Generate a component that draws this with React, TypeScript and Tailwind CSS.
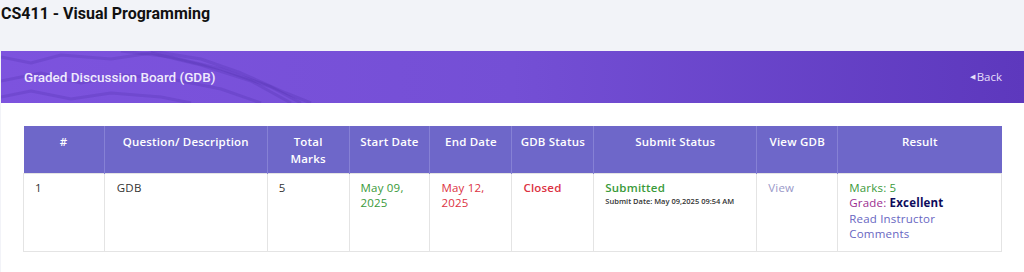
import React from "react";

const headers = [
  { label: "#", w: "w-[81px]" },
  { label: "Question/ Description", w: "w-[163px]" },
  { label: "Total Marks", w: "w-[82px]" },
  { label: "Start Date", w: "w-[81px]" },
  { label: "End Date", w: "w-[82px]" },
  { label: "GDB Status", w: "w-[82px]" },
  { label: "Submit Status", w: "w-[163px]" },
  { label: "View GDB", w: "w-[81px]" },
  { label: "Result", w: "w-[164px]" },
];

function BannerPattern() {
  return (
    <svg
      className="absolute left-0 top-0 h-full w-[360px]"
      viewBox="0 0 360 52"
      preserveAspectRatio="none"
      fill="none"
    >
      <g stroke="#4b2aa6" strokeOpacity="0.22" strokeWidth="3" strokeLinejoin="round">
        <path d="M0 6 L30 12 L60 4 L110 8 L150 2 L200 14 L250 30 L290 52" />
        <path d="M0 30 L40 22 L80 32 L120 24 L170 28 L220 38 L260 52" />
        <path d="M0 46 L30 40 L70 48 L110 42 L160 46 L190 52" />
        <path d="M120 0 L170 6 L220 18 L270 36 L300 52" />
        <path d="M150 0 L200 8 L240 22 L285 42 L310 52" />
      </g>
    </svg>
  );
}

export default function App() {
  return (
    <div className="h-[272px] w-[1024px] overflow-hidden bg-[#f2f3f8]">
      <h1 className="h-[51px] pt-[3px] pl-[1px] font-['Roboto',sans-serif] text-[16px] font-bold leading-[22px] text-[#111]">
        CS411 - Visual Programming
      </h1>
      <div className="ml-[1px] bg-white">
        <div className="relative flex h-[52px] items-center justify-between overflow-hidden bg-gradient-to-r from-[#7d53de] via-[#744fd5] to-[#5d38bd] pl-[23px] pr-[22px]">
          <BannerPattern />
          <span className="relative font-['Roboto',sans-serif] text-[13.5px] font-medium text-[#efeafd]">
            Graded Discussion Board (GDB)
          </span>
          <a className="relative flex items-center gap-[2px] font-['Open_Sans',sans-serif] text-[11.5px] text-[#e6defa]">
            <span className="text-[7px]">◀</span>Back
          </a>
        </div>
        <div className="px-[22px] pb-[21px] pt-[23px] font-['Open_Sans',sans-serif] tracking-[0.2px]">
          <table className="border-collapse">
            <thead>
              <tr className="bg-[#6e67c9]">
                {headers.map((h, i) => (
                  <th
                    key={h.label}
                    className={`${h.w} h-[47px] whitespace-nowrap px-[4px] pt-[7px] align-top text-[11.5px] font-semibold leading-[17px] text-white ${
                      i > 0 ? "border-l border-[#8681d5]" : ""
                    }`}
                  >
                    {h.label === "Total Marks" ? (
                      <>
                        Total
                        <br />
                        Marks
                      </>
                    ) : (
                      h.label
                    )}
                  </th>
                ))}
              </tr>
            </thead>
            <tbody>
              <tr className="h-[78px] align-top text-[11.5px] leading-[15.5px] text-[#333]">
                <td className="border border-[#e4e4e4] px-[11px] pt-[6px]">1</td>
                <td className="border border-[#e4e4e4] px-[12px] pt-[6px]">GDB</td>
                <td className="border border-[#e4e4e4] px-[11px] pt-[6px]">5</td>
                <td className="border border-[#e4e4e4] px-[11px] pt-[6px] font-medium text-[#3a9a3a]">
                  May 09,
                  <br />
                  2025
                </td>
                <td className="border border-[#e4e4e4] px-[11px] pt-[6px] font-medium text-[#dc3242]">
                  May 12,
                  <br />
                  2025
                </td>
                <td className="border border-[#e4e4e4] px-[11px] pt-[6px] font-semibold text-[#dc3242]">
                  Closed
                </td>
                <td className="border border-[#e4e4e4] px-[11px] pt-[6px]">
                  <div className="font-semibold text-[#3a9a3a]">Submitted</div>
                  <div className="whitespace-nowrap text-[7.5px] font-semibold leading-[13px] tracking-normal text-[#333]">
                    Submit Date: May 09,2025 09:54 AM
                  </div>
                </td>
                <td className="border border-[#e4e4e4] px-[11px] pt-[6px] text-[#9a98c8]">View</td>
                <td className="border border-[#e4e4e4] px-[11px] pt-[6px] font-medium">
                  <div className="text-[#3a9a3a]">Marks: 5</div>
                  <div className="text-[#9b2d8f]">
                    Grade: <span className="font-bold text-[#0e0b5c]">Excellent</span>
                  </div>
                  <div className="text-[#6866c2]">
                    Read Instructor
                    <br />
                    Comments
                  </div>
                </td>
              </tr>
            </tbody>
          </table>
        </div>
      </div>
    </div>
  );
}
